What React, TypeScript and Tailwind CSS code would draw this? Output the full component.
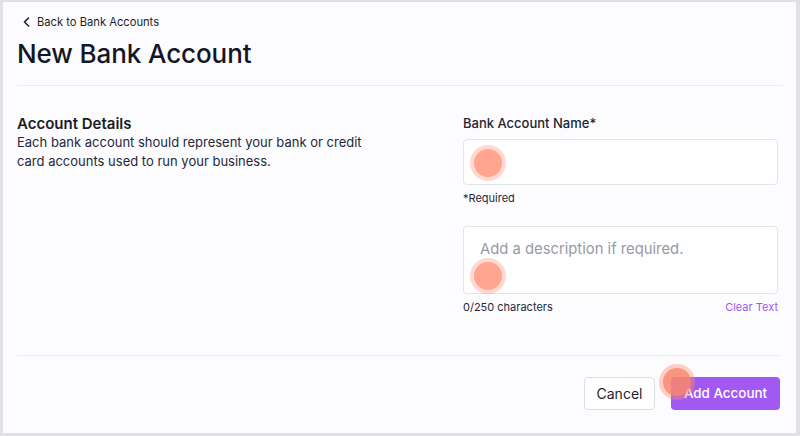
import React from "react";

export default function App() {
  return (
    <div
      className="relative w-[800px] h-[436px] border-l-[3px] border-t-[2px] border-r-[4px] border-b-[3px] border-[#e1e1e3] bg-[#fcfcfe] text-[#151827] overflow-hidden"
      style={{ fontFamily: "Inter, 'Noto Sans', sans-serif" }}
    >
      <div className="flex flex-col h-full px-[14px]">
        <div className="flex items-center gap-[7px] pt-[12px] pl-[6px] text-[11.2px] leading-[16px] text-[#1d1f2b]">
          <svg width="7" height="10" viewBox="0 0 7 10" fill="none">
            <path d="M5.5 1L1.5 5L5.5 9" stroke="#1d1f2b" strokeWidth="1.6" strokeLinecap="round" strokeLinejoin="round" />
          </svg>
          <span>Back to Bank Accounts</span>
        </div>
        <h1 className="mt-[7px] text-[26px] leading-[34px] font-medium tracking-[-0.1px] text-[#141625]">New Bank Account</h1>
        <div className="mt-[14px] h-px bg-[#ececf1] mr-[-1px]" />

        <div className="flex pt-[28px]">
          <div className="w-[446px]">
            <div className="text-[15px] leading-[19px] font-semibold text-[#1a1c28]">Account Details</div>
            <p className="text-[13px] leading-[19px] text-[#26283a] w-[360px]">
              Each bank account should represent your bank or credit card accounts used to run your business.
            </p>
          </div>
          <div className="w-[315px]">
            <div className="text-[13px] leading-[18px] font-medium text-[#232534]">Bank Account Name*</div>
            <div className="mt-[7px] h-[46px] rounded-[4px] border border-[#e3e3ea] bg-white" />
            <div className="mt-[6px] text-[11px] leading-[15px] text-[#26283a]">*Required</div>
            <div className="mt-[20px] h-[68px] rounded-[4px] border border-[#e3e3ea] bg-white px-[16px] pt-[12px] text-[14.8px] leading-[20px] text-[#9699a8]">
              Add a description if required.
            </div>
            <div className="mt-[6px] flex justify-between text-[11px] leading-[15px]">
              <span className="text-[#26283a]">0/250 characters</span>
              <span className="text-[#a157f0]">Clear Text</span>
            </div>
          </div>
        </div>

        <div className="mt-[40px] h-px bg-[#ececf1] mr-[2px]" />
        <div className="flex justify-end gap-[16px] pt-[21px] pr-[2px]">
          <button className="h-[33px] w-[71px] rounded-[4px] border border-[#dcdce4] bg-white text-[14px] text-[#1d1f2b]">Cancel</button>
          <button className="h-[33px] w-[109px] rounded-[4px] bg-[#a259f3] text-[13.4px] font-medium text-white">Add Account</button>
        </div>
      </div>

      {/* click indicators */}
      <div className="absolute left-[467px] top-[143px] w-[36px] h-[36px] rounded-full bg-[#ff9f86]/40 flex items-center justify-center">
        <div className="w-[28px] h-[28px] rounded-full bg-[#ffa590]" />
      </div>
      <div className="absolute left-[467px] top-[256px] w-[36px] h-[36px] rounded-full bg-[#ff9f86]/40 flex items-center justify-center">
        <div className="w-[28px] h-[28px] rounded-full bg-[#ffa590]" />
      </div>
      <div className="absolute left-[656px] top-[362px] w-[36px] h-[36px] rounded-full bg-[#ff8a6e]/40 flex items-center justify-center">
        <div className="w-[28px] h-[28px] rounded-full bg-[#f8866e]/80" />
      </div>
    </div>
  );
}
